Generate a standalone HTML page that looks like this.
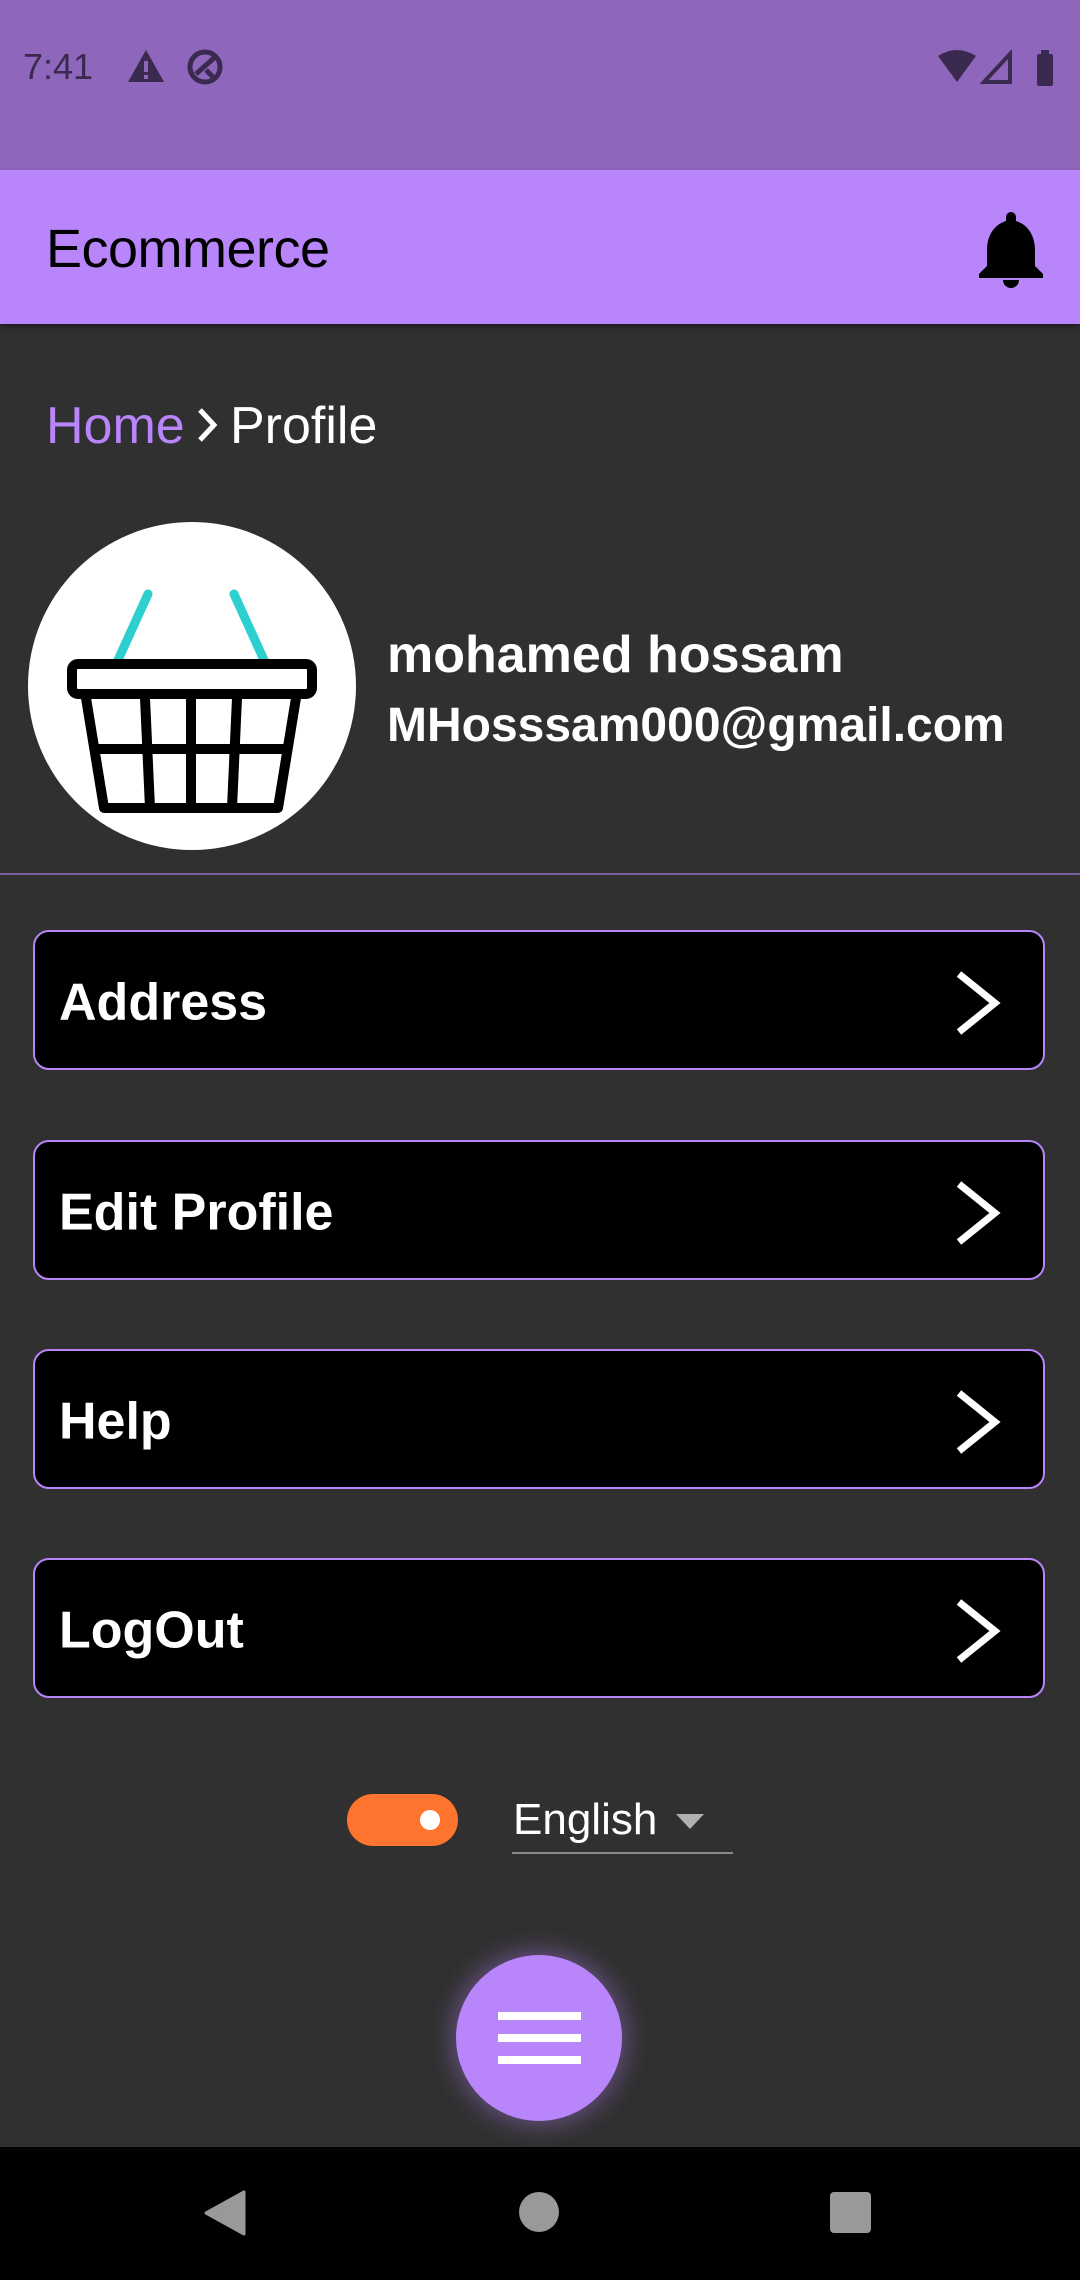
<!DOCTYPE html>
<html><head><meta charset="utf-8"><style>
*{margin:0;padding:0;box-sizing:border-box}
body{width:1080px;height:2280px;background:#303030;font-family:"Liberation Sans",Roboto,sans-serif;position:relative;overflow:hidden}
.abs{position:absolute}
.btn{position:absolute;left:33px;width:1012px;height:140px;background:#000;border:2px solid #b985fb;border-radius:16px}
.btn span{position:absolute;left:24px;top:50%;transform:translateY(-46%);color:#fff;font-weight:bold;font-size:52px}
.btn svg{position:absolute;left:918px;top:38px}
</style></head><body>
<div class="abs" style="left:0;top:0;width:1080px;height:170px;background:#8e66bb"></div>
<div class="abs" style="left:23px;top:46px;font-size:36px;color:#3a2a50">7:41</div>
<svg class="abs" style="left:126px;top:48px" width="40" height="36" viewBox="0 0 40 36"><path d="M20 2 L38 34 H2 Z" fill="#3a2a50"/><rect x="18" y="13" width="4" height="11" fill="#8e66bb"/><rect x="18" y="27" width="4" height="4" fill="#8e66bb"/></svg>
<svg class="abs" style="left:186px;top:48px" width="40" height="40" viewBox="0 0 40 40"><circle cx="19" cy="19" r="15" fill="none" stroke="#3a2a50" stroke-width="5"/><path d="M10 26 L28 10 M20 22 L30 32" stroke="#3a2a50" stroke-width="5"/></svg>
<svg class="abs" style="left:938px;top:50px" width="122" height="36" viewBox="0 0 122 36"><path d="M0 6 Q19 -6 38 6 L19 32 Z" fill="#3a2a50"/><path d="M46 32 L72 4 V32 Z" fill="none" stroke="#3a2a50" stroke-width="4"/><rect x="99" y="4" width="16" height="32" rx="2" fill="#3a2a50"/><rect x="103" y="0" width="8" height="5" fill="#3a2a50"/></svg>
<div class="abs" style="left:0;top:170px;width:1080px;height:154px;background:#b985fb;box-shadow:0 3px 6px rgba(0,0,0,.4)"></div>
<div class="abs" style="left:46px;top:218px;font-size:54px;color:#000;letter-spacing:-0.5px">Ecommerce</div>
<svg class="abs" style="left:977px;top:210px" width="68" height="78" viewBox="0 0 68 78"><path d="M34 2 a5 5 0 0 1 5 5 v4 C52 15 58 27 58 40 V56 L66 64 V68 H2 V64 L10 56 V40 C10 27 16 15 29 11 V7 a5 5 0 0 1 5 -5Z" fill="#000"/><path d="M26 70 h16 a8 8 0 0 1 -16 0z" fill="#000"/></svg>
<div class="abs" style="left:46px;top:396px;font-size:52px;color:#b985fb">Home</div>
<svg class="abs" style="left:196px;top:406px" width="24" height="38" viewBox="0 0 24 38"><path d="M4 4 L18 19 L4 34" fill="none" stroke="#fff" stroke-width="5"/></svg>
<div class="abs" style="left:230px;top:396px;font-size:52px;color:#fff">Profile</div>
<div class="abs" style="left:28px;top:522px;width:328px;height:328px;border-radius:50%;background:#fff"></div>
<svg class="abs" style="left:28px;top:522px" width="328" height="328" viewBox="0 0 328 328">
<path d="M120 72 L90 138 M206 72 L236 138" stroke="#2ecfcf" stroke-width="9" stroke-linecap="round"/>
<rect x="44" y="142" width="240" height="30" rx="6" fill="#fff" stroke="#000" stroke-width="10"/>
<path d="M58 176 L76 286 H250 L268 176" fill="none" stroke="#000" stroke-width="10" stroke-linejoin="round"/>
<path d="M117 176 L122 286 M163 176 V286 M209 176 L204 286 M66 227 H260" stroke="#000" stroke-width="10"/>
</svg>
<div class="abs" style="left:387px;top:625px;font-size:52px;font-weight:bold;color:#fff">mohamed hossam</div>
<div class="abs" style="left:387px;top:698px;font-size:48px;font-weight:bold;color:#fff">MHosssam000@gmail.com</div>
<div class="abs" style="left:0;top:873px;width:1080px;height:2px;background:#7a5ea0"></div>
<div class="btn" style="top:930px"><span>Address</span><svg width="52" height="66" viewBox="0 0 52 66"><path d="M6 4 L42 33 L6 62" fill="none" stroke="#fff" stroke-width="7"/></svg></div>
<div class="btn" style="top:1140px"><span>Edit Profile</span><svg width="52" height="66" viewBox="0 0 52 66"><path d="M6 4 L42 33 L6 62" fill="none" stroke="#fff" stroke-width="7"/></svg></div>
<div class="btn" style="top:1349px"><span>Help</span><svg width="52" height="66" viewBox="0 0 52 66"><path d="M6 4 L42 33 L6 62" fill="none" stroke="#fff" stroke-width="7"/></svg></div>
<div class="btn" style="top:1558px"><span>LogOut</span><svg width="52" height="66" viewBox="0 0 52 66"><path d="M6 4 L42 33 L6 62" fill="none" stroke="#fff" stroke-width="7"/></svg></div>
<div class="abs" style="left:347px;top:1794px;width:111px;height:52px;border-radius:26px;background:#ff7530"></div>
<div class="abs" style="left:420px;top:1810px;width:20px;height:20px;border-radius:50%;background:#fff"></div>
<div class="abs" style="left:513px;top:1795px;font-size:44px;color:#fff">English</div>
<svg class="abs" style="left:676px;top:1814px" width="28" height="16" viewBox="0 0 28 16"><path d="M0 0 H28 L14 15Z" fill="#b0b0b0"/></svg>
<div class="abs" style="left:512px;top:1852px;width:221px;height:2px;background:#888"></div>
<div class="abs" style="left:456px;top:1955px;width:166px;height:166px;border-radius:50%;background:#b985fb;box-shadow:0 0 22px 6px rgba(185,133,251,.35)"></div>
<div class="abs" style="left:498px;top:2012px;width:83px;height:8px;background:#fff"></div>
<div class="abs" style="left:498px;top:2034px;width:83px;height:8px;background:#fff"></div>
<div class="abs" style="left:498px;top:2056px;width:83px;height:8px;background:#fff"></div>
<div class="abs" style="left:0;top:2147px;width:1080px;height:133px;background:#000"></div>
<svg class="abs" style="left:204px;top:2190px" width="42" height="46" viewBox="0 0 42 46"><path d="M40 2 V44 L2 23Z" fill="#999" stroke="#999" stroke-width="3" stroke-linejoin="round"/></svg>
<div class="abs" style="left:519px;top:2192px;width:40px;height:40px;border-radius:50%;background:#999"></div>
<div class="abs" style="left:830px;top:2192px;width:41px;height:41px;border-radius:4px;background:#999"></div>
</body></html>
